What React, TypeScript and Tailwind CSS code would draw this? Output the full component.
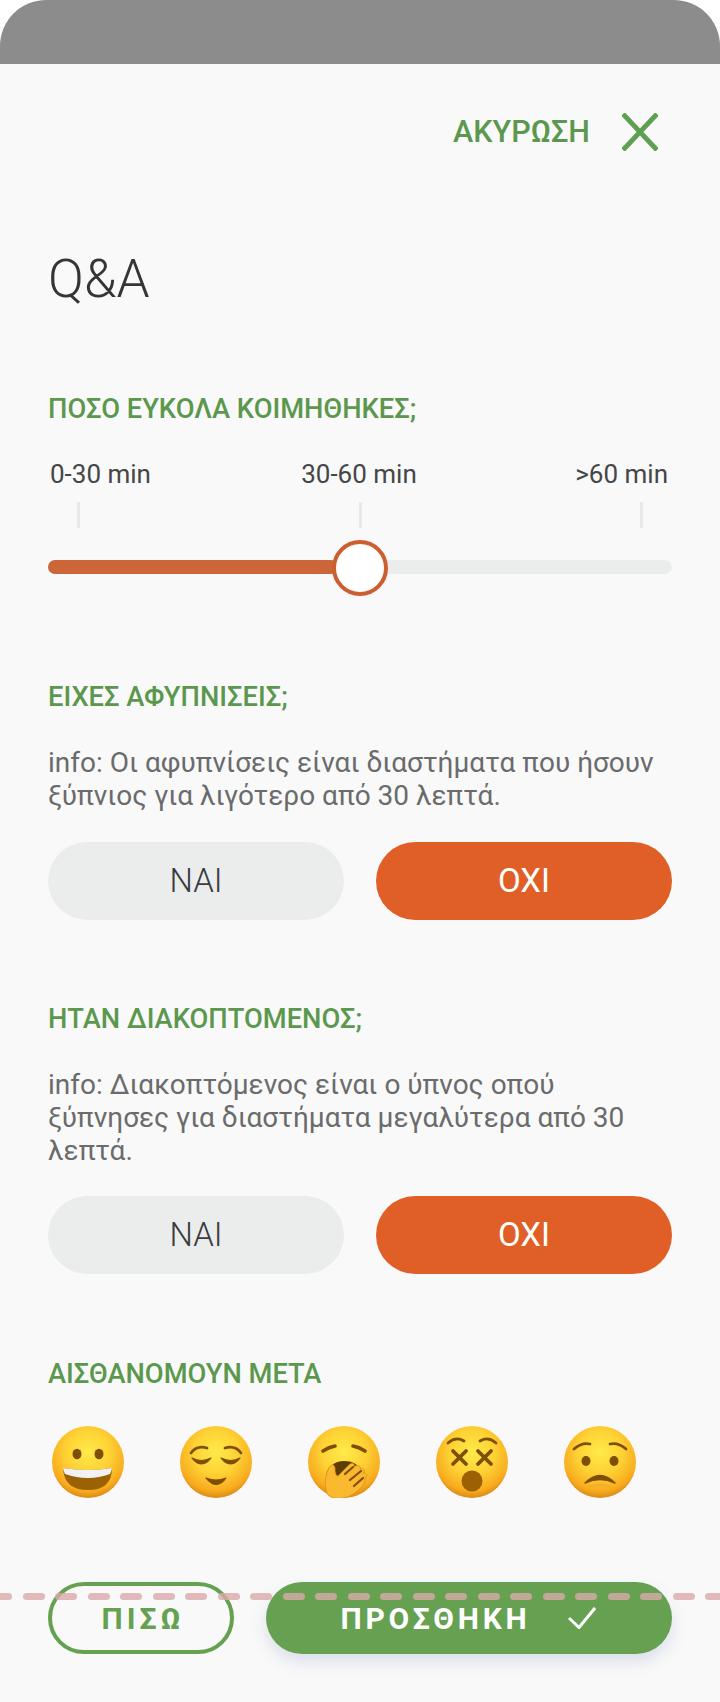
import React from 'react';

const font = { fontFamily: 'Roboto, "Noto Sans", sans-serif' };

function Face({ children, id }: { children: React.ReactNode; id: string }) {
  return (
    <svg width="72" height="72" viewBox="0 0 72 72">
      <defs>
        <radialGradient id={id} cx="50%" cy="36%" r="64%">
          <stop offset="0%" stopColor="#ffeb4a" />
          <stop offset="50%" stopColor="#fed033" />
          <stop offset="85%" stopColor="#f9ab1e" />
          <stop offset="100%" stopColor="#d98a16" />
        </radialGradient>
      </defs>
      <circle cx="36" cy="36" r="36" fill={`url(#${id})`} />
      {children}
    </svg>
  );
}

const brown = '#7f4f06';

function Grin() {
  return (
    <Face id="grin">
      <ellipse cx="25" cy="28" rx="4.5" ry="5.2" fill={brown} />
      <ellipse cx="47" cy="28" rx="4.5" ry="5.2" fill={brown} />
      <path d="M11 42 Q36 46 60 42 Q60 64 36 64 Q12 64 11 42Z" fill="#9c6103" />
      <path d="M11 42 Q36 46 60 42 Q59.5 45 58 48 Q36 56 13 48 Q11.5 45 11 42Z" fill="#f2f2f2" />
    </Face>
  );
}

function Relieved() {
  return (
    <Face id="relieved">
      <path d="M11 27 Q17 19 27 22" fill="none" stroke={brown} strokeWidth="2.8" strokeLinecap="round" />
      <path d="M61 27 Q55 19 45 22" fill="none" stroke={brown} strokeWidth="2.8" strokeLinecap="round" />
      <path d="M12 32 Q21 37 31 32 Q22 44 12 32Z" fill={brown} stroke={brown} strokeWidth="1.2" strokeLinejoin="round" />
      <path d="M60 32 Q51 37 41 32 Q50 44 60 32Z" fill={brown} stroke={brown} strokeWidth="1.2" strokeLinejoin="round" />
      <path d="M26 52 Q36 56 46 52 Q37 65 26 52Z" fill={brown} stroke={brown} strokeWidth="1.2" strokeLinejoin="round" />
    </Face>
  );
}

function Yawn() {
  return (
    <Face id="yawn">
      <path d="M15 25 Q21 21 27 20" fill="none" stroke={brown} strokeWidth="3.6" strokeLinecap="round" />
      <path d="M57 25 Q51 21 45 20" fill="none" stroke={brown} strokeWidth="3.6" strokeLinecap="round" />
      <path d="M18 52 C18 41 27 35 36 35 C44 35 50 38 52 44 L30 60Z" fill="#5e3c05" />
      <path d="M20 69 C16 60 17 50 20 44 C22 38 27 37 27 43 C27 47 28 50 30 50 L42 38 C45 36 47 38 46 41 C49 38 54 40 52 43 C56 41 58 45 55 47 C59 46 60 50 57 52 C58 56 54 62 48 66 C40 73 26 75 20 69Z" fill="#fbb92f" stroke="#d98f18" strokeWidth="0.8" />
      <path d="M37 48 L45 41 M42 54 L53 45 M46 60 L55 52" stroke={brown} strokeWidth="2.2" strokeLinecap="round" />
    </Face>
  );
}

function Dizzy() {
  return (
    <Face id="dizzy">
      <path d="M12 17 Q20 10 28 15" fill="none" stroke={brown} strokeWidth="2.8" strokeLinecap="round" />
      <path d="M60 17 Q52 10 44 15" fill="none" stroke={brown} strokeWidth="2.8" strokeLinecap="round" />
      <path d="M17 25 L30 38 M30 25 L17 38" stroke={brown} strokeWidth="3.8" strokeLinecap="round" />
      <path d="M42 25 L55 38 M55 25 L42 38" stroke={brown} strokeWidth="3.8" strokeLinecap="round" />
      <circle cx="36" cy="55" r="10.5" fill="#9c6103" />
    </Face>
  );
}

function Frown() {
  return (
    <Face id="frown">
      <path d="M10 23 Q18 16 26 18" fill="none" stroke={brown} strokeWidth="2.8" strokeLinecap="round" />
      <path d="M62 23 Q54 16 46 18" fill="none" stroke={brown} strokeWidth="2.8" strokeLinecap="round" />
      <ellipse cx="22" cy="35" rx="4.5" ry="5" fill={brown} />
      <ellipse cx="50" cy="35" rx="4.5" ry="5" fill={brown} />
      <path d="M22 62 Q36 53 50 62 Q36 58 22 62Z" fill="#f2b02a" />
      <path d="M21 57 Q36 42 51 57 Q36 50 21 57Z" fill={brown} stroke={brown} strokeWidth="1.4" strokeLinejoin="round" />
    </Face>
  );
}

function Heading({ children }: { children: React.ReactNode }) {
  return <div className="text-[27.3px] leading-[30px] font-medium text-[#5b984e]">{children}</div>;
}

function YesNo() {
  return (
    <div className="flex gap-8">
      <div className="flex h-[78px] w-[296px] items-center justify-center rounded-full bg-[#ebeded] text-[33px] font-light text-[#3a3c3d]">
        ΝΑΙ
      </div>
      <div className="flex h-[78px] w-[296px] items-center justify-center rounded-full bg-[#df5f27] text-[33px] font-normal text-white">
        ΟΧΙ
      </div>
    </div>
  );
}

export default function App() {
  return (
    <div className="relative h-[1702px] w-[720px] overflow-hidden bg-white" style={font}>
      <div className="h-16 rounded-t-[46px] bg-[#8c8c8c]" />
      <div className="h-[1638px] bg-[#f9f9f9] px-12 pt-[49px]">
        {/* Cancel */}
        <div className="flex h-[38px] items-center justify-end gap-8 pr-[14px]">
          <span className="text-[30.5px] leading-[38px] font-medium text-[#5b984e]">ΑΚΥΡΩΣΗ</span>
          <svg width="36" height="38" viewBox="0 0 36 38">
            <path d="M1 1 L35 37 M35 1 L1 37" stroke="#5f9f51" strokeWidth="5" />
          </svg>
        </div>

        <h1 className="mt-[100px] text-[53px] leading-[56px] font-light text-[#333536]">Q&amp;A</h1>

        {/* Slider */}
        <div className="mt-[87px]">
          <Heading>ΠΟΣΟ ΕΥΚΟΛΑ ΚΟΙΜΗΘΗΚΕΣ;</Heading>
          <div className="mt-[35px] grid grid-cols-3 pr-1 pl-[2px] text-[26px] leading-[30px] font-normal text-[#444647]">
            <span>0-30 min</span>
            <span className="text-center">30-60 min</span>
            <span className="text-right">&gt;60 min</span>
          </div>
          <div className="mt-[13px] flex justify-between pr-[29px] pl-[29px]">
            <div className="h-[26px] w-[3px] bg-[#e8e9e9]" />
            <div className="h-[26px] w-[3px] bg-[#e8e9e9]" />
            <div className="h-[26px] w-[3px] bg-[#e8e9e9]" />
          </div>
          <div className="relative mt-8 h-[14px] rounded-full bg-[#ebeded]">
            <div className="h-full w-[290px] rounded-full bg-[#cc6538]" />
            <div className="absolute top-[-20px] left-[284px] h-14 w-14 rounded-full border-4 border-[#cc5f2f] bg-white" />
          </div>
        </div>

        <div className="mt-[108px]">
          <Heading>ΕΙΧΕΣ ΑΦΥΠΝΙΣΕΙΣ;</Heading>
          <p className="mt-[34px] text-[28px] leading-[33px] font-normal text-[#6a6b6c]">
            info: Οι αφυπνίσεις είναι διαστήματα που ήσουν ξύπνιος για λιγότερο από 30 λεπτά.
          </p>
          <div className="mt-[30px]">
            <YesNo />
          </div>
        </div>

        <div className="mt-[84px]">
          <Heading>ΗΤΑΝ ΔΙΑΚΟΠΤΟΜΕΝΟΣ;</Heading>
          <p className="mt-[34px] text-[28px] leading-[33px] font-normal text-[#6a6b6c]">
            info: Διακοπτόμενος είναι ο ύπνος οπού ξύπνησες για διαστήματα μεγαλύτερα από 30 λεπτά.
          </p>
          <div className="mt-[29px]">
            <YesNo />
          </div>
        </div>

        <div className="mt-[85px]">
          <Heading>ΑΙΣΘΑΝΟΜΟΥΝ ΜΕΤΑ</Heading>
          <div className="mt-[37px] flex gap-14 pl-1">
            <Grin />
            <Relieved />
            <Yawn />
            <Dizzy />
            <Frown />
          </div>
        </div>

        {/* Bottom actions */}
        <div className="mt-[84px] flex gap-8">
          <div className="flex h-[72px] w-[186px] items-center justify-center rounded-full border-4 border-[#66a152] pl-1 text-[30px] font-bold tracking-[4px] text-[#66a152]">
            ΠΙΣΩ
          </div>
          <div className="flex h-[72px] w-[406px] items-center justify-center gap-[37px] rounded-full bg-[#66a152] pr-[2px] text-[30px] font-bold tracking-[3.8px] text-white shadow-[0_8px_16px_rgba(90,110,170,0.18)]">
            ΠΡΟΣΘΗΚΗ
            <svg width="28" height="22" viewBox="0 0 28 22">
              <path d="M1 11 L11 20.5 L27 1" fill="none" stroke="#fff" strokeWidth="3" />
            </svg>
          </div>
        </div>
      </div>

      {/* dashed guide over the footer */}
      <div className="absolute top-[1593px] left-[-10px] flex gap-[10.5px]">
        {Array.from({ length: 24 }).map((_, i) => (
          <div key={i} className="h-[7px] w-[22px] shrink-0 rounded-full bg-[#d9aaaa]/80" />
        ))}
      </div>
    </div>
  );
}
